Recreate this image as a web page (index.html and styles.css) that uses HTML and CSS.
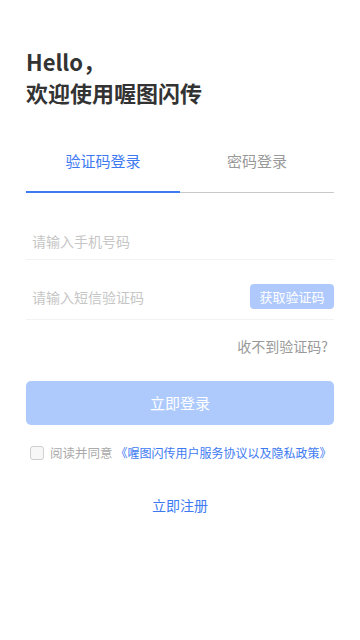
FILE: index.html
```html
<!DOCTYPE html>
<html lang="zh">
<head>
<meta charset="utf-8">
<meta name="viewport" content="width=360">
<link rel="stylesheet" href="styles.css">
</head>
<body>
<div class="page">
  <h1 class="title">Hello，<br>欢迎使用喔图闪传</h1>
  <div class="tabs">
    <div class="tab active">验证码登录</div>
    <div class="tab">密码登录</div>
  </div>
  <div class="field field-phone"><span class="ph">请输入手机号码</span></div>
  <div class="field field-code"><span class="ph">请输入短信验证码</span><span class="code-btn">获取验证码</span></div>
  <div class="nocode">收不到验证码?</div>
  <div class="login-btn">立即登录</div>
  <div class="agree"><span class="box"></span><span class="gray">阅读并同意</span><span class="link">《喔图闪传用户服务协议以及隐私政策》</span></div>
  <div class="register">立即注册</div>
</div>
</body>
</html>
```
FILE: styles.css
```css
* { box-sizing: border-box; }
html, body { margin: 0; padding: 0; background: #fff; }
body { font-family: "Noto Sans CJK SC", "Noto Sans", sans-serif; }
.page { padding: 46px 26px 0; display: flex; flex-direction: column; }
.title { margin: 0; font-size: 22px; line-height: 31px; font-weight: 700; color: #333; }
.tabs { display: flex; margin-top: 32px; }
.tab { flex: 1; text-align: center; font-size: 15px; color: #999; height: 53px; line-height: 42px; border-bottom: 1px solid #c8c8c8; }
.tab.active { color: #3d7af2; border-bottom: 2px solid #3d7af2; }
.field { display: flex; align-items: center; justify-content: space-between; border-bottom: 1px solid #f2f2f2; padding-left: 6px; }
.field-phone { height: 67px; padding-top: 30px; }
.field-code { height: 60px; padding-top: 14px; }
.ph { font-size: 14px; line-height: 20px; color: #c6c6c6; }
.code-btn { background: #b0c9fd; color: #fff; font-size: 13px; border-radius: 4px; width: 84px; height: 25px; line-height: 25px; text-align: center; }
.nocode { align-self: flex-end; font-size: 14px; color: #999; margin-top: 16px; margin-right: 6px; line-height: 20px; }
.login-btn { margin-top: 25px; height: 44px; line-height: 44px; border-radius: 5px; background: #aecafd; color: #fff; text-align: center; font-size: 15px; }
.agree { display: flex; align-items: center; margin-top: 19px; padding-left: 4px; line-height: 18px; white-space: nowrap; }
.box { flex: none; width: 14px; height: 14px; border: 1px solid #cfcfcf; border-radius: 3px; background: #f7f7f7; margin-right: 6px; }
.gray { color: #aaa; font-size: 12.5px; }
.link { color: #3d7af2; margin-left: 3px; font-size: 12px; }
.register { text-align: center; color: #3d7af2; font-size: 14px; margin-top: 33px; line-height: 20px; }
```
